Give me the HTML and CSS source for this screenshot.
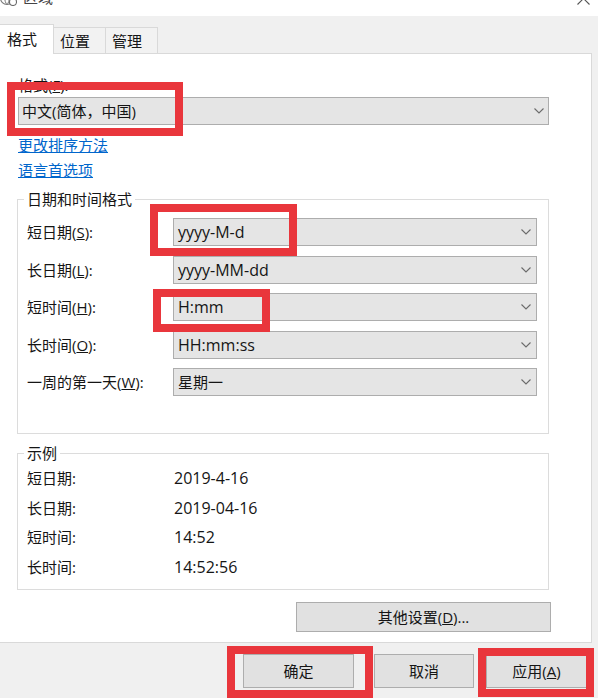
FILE: index.html
```html
<!DOCTYPE html>
<html lang="zh-CN">
<head>
<meta charset="utf-8">
<title>区域</title>
<link rel="stylesheet" href="styles.css">
</head>
<body>
<div class="window">
  <header class="titlebar">
    <svg class="app-icon" width="17" height="16" viewBox="0 0 17 16">
      <circle cx="7" cy="8" r="6.5" fill="none" stroke="#7a7a7a" stroke-width="1.2"/>
      <path d="M1 8h12M7 1.5c-3 3-3 10 0 13M7 1.5c3 3 3 10 0 13" fill="none" stroke="#7a7a7a" stroke-width="1"/>
      <circle cx="13" cy="12" r="3.5" fill="#fff" stroke="#6a6a6a" stroke-width="1.1"/>
    </svg>
    <span class="title">区域</span>
    <svg class="close" width="13" height="13" viewBox="0 0 13 13">
      <path d="M0.5 0.5L12.5 12.5M12.5 0.5L0.5 12.5" stroke="#555" stroke-width="1.1"/>
    </svg>
  </header>

  <nav class="tabs">
    <div class="tab active">格式</div>
    <div class="tab">位置</div>
    <div class="tab">管理</div>
    <div class="tab-fill"></div>
  </nav>

  <main class="panel">
    <div class="field-label">格式(<u>F</u>):</div>
    <div class="combo wide">
      <span>中文(简体，中国)</span>
      <svg class="chev" width="10" height="6" viewBox="0 0 10 6"><path d="M0.5 0.5L5 5L9.5 0.5" fill="none" stroke="#6b6b6b" stroke-width="1.1"/></svg>
    </div>
    <a class="link link-first" href="#">更改排序方法</a>
    <a class="link link-second" href="#">语言首选项</a>

    <fieldset class="group formats">
      <legend>日期和时间格式</legend>
      <div class="rows">
        <div class="row">
          <span class="lbl">短日期(<u>S</u>):</span>
          <div class="combo"><span class="latin">yyyy-M-d</span><svg class="chev" width="10" height="6" viewBox="0 0 10 6"><path d="M0.5 0.5L5 5L9.5 0.5" fill="none" stroke="#6b6b6b" stroke-width="1.1"/></svg></div>
        </div>
        <div class="row">
          <span class="lbl">长日期(<u>L</u>):</span>
          <div class="combo"><span class="latin">yyyy-MM-dd</span><svg class="chev" width="10" height="6" viewBox="0 0 10 6"><path d="M0.5 0.5L5 5L9.5 0.5" fill="none" stroke="#6b6b6b" stroke-width="1.1"/></svg></div>
        </div>
        <div class="row">
          <span class="lbl">短时间(<u>H</u>):</span>
          <div class="combo"><span class="latin">H:mm</span><svg class="chev" width="10" height="6" viewBox="0 0 10 6"><path d="M0.5 0.5L5 5L9.5 0.5" fill="none" stroke="#6b6b6b" stroke-width="1.1"/></svg></div>
        </div>
        <div class="row">
          <span class="lbl">长时间(<u>O</u>):</span>
          <div class="combo"><span class="latin">HH:mm:ss</span><svg class="chev" width="10" height="6" viewBox="0 0 10 6"><path d="M0.5 0.5L5 5L9.5 0.5" fill="none" stroke="#6b6b6b" stroke-width="1.1"/></svg></div>
        </div>
        <div class="row">
          <span class="lbl">一周的第一天(<u>W</u>):</span>
          <div class="combo"><span>星期一</span><svg class="chev" width="10" height="6" viewBox="0 0 10 6"><path d="M0.5 0.5L5 5L9.5 0.5" fill="none" stroke="#6b6b6b" stroke-width="1.1"/></svg></div>
        </div>
      </div>
    </fieldset>

    <fieldset class="group example">
      <legend>示例</legend>
      <div class="ex-row"><span class="lbl">短日期:</span><span class="latin">2019-4-16</span></div>
      <div class="ex-row"><span class="lbl">长日期:</span><span class="latin">2019-04-16</span></div>
      <div class="ex-row"><span class="lbl">短时间:</span><span class="latin">14:52</span></div>
      <div class="ex-row"><span class="lbl">长时间:</span><span class="latin">14:52:56</span></div>
    </fieldset>

    <div class="more-row"><button class="btn more">其他设置(<u>D</u>)...</button></div>
  </main>

  <footer class="footer">
    <button class="btn ok">确定</button>
    <button class="btn cancel">取消</button>
    <button class="btn apply">应用(<u>A</u>)</button>
  </footer>

  <div class="mark mark-format"></div>
  <div class="mark mark-short-date"></div>
  <div class="mark mark-short-time"></div>
  <div class="mark mark-ok"></div>
  <div class="mark mark-apply"></div>
</div>
</body>
</html>
```

FILE: styles.css
```css
* { box-sizing: border-box; }

html, body {
  margin: 0;
  padding: 0;
}

body {
  width: 598px;
  height: 698px;
  overflow: hidden;
  background: #f0f0f0;
  font-family: "Open Sans", "Noto Sans CJK SC", sans-serif;
  font-size: 15px;
  line-height: 18px;
  color: #151515;
}

.window {
  position: relative;
  width: 598px;
  height: 698px;
}

/* title bar (mostly cropped) */
.titlebar {
  height: 16px;
  background: #fff;
  display: flex;
  align-items: flex-end;
  padding-bottom: 11px;
  overflow: hidden;
}

.app-icon {
  flex: none;
  margin-left: 0;
  margin-bottom: -1px;
}

.title {
  margin-left: 6px;
  font-size: 15px;
  line-height: 15px;
  color: #444;
}

.close {
  flex: none;
  margin-left: auto;
  margin-right: 8px;
}

/* tabs */
.tabs {
  display: flex;
  align-items: flex-end;
  width: 592px;
  height: 30px;
  margin-top: 8px;
}

.tab {
  height: 27px;
  width: 52px;
  padding: 1px 0 0 6px;
  border-top: 1px solid #d9d9d9;
  border-right: 1px solid #d9d9d9;
  border-bottom: 1px solid #d9d9d9;
  background: #f2f2f2;
  display: flex;
  align-items: center;
}

.tab.active {
  width: 54px;
  height: 30px;
  padding: 0 0 2px 7px;
  background: #fff;
  border-bottom: none;
}

.tab-fill {
  flex: 1;
  height: 1px;
  background: #d9d9d9;
}

/* main panel */
.panel {
  width: 592px;
  background: #fff;
  border-right: 1px solid #d9d9d9;
  border-bottom: 1px solid #d9d9d9;
  padding: 22px 40px 10px 18px;
}

.field-label {
  margin-bottom: 3px;
}

.combo {
  height: 28px;
  border: 1px solid #adadad;
  background: #e5e5e5;
  display: flex;
  align-items: center;
  justify-content: space-between;
  padding: 0 5px 0 4px;
}

.combo.wide {
  margin-right: 2px;
  padding: 0 4px 0 3px;
}

.chev {
  flex: none;
}

.latin {
  font-size: 16px;
}

.link {
  display: block;
  width: max-content;
  color: #0066cc;
  text-decoration: underline;
}

.link-first { margin-top: 11px; }
.link-second { margin-top: 7px; }

/* group boxes */
.group {
  margin: 11px 2px 0 -1px;
  border: 1px solid #dcdcdc;
  min-width: 0;
}

.group legend {
  padding: 0 3px;
  margin-left: -3px;
  line-height: 18px;
}

.formats {
  padding: 10px 11px 37px 9px;
}

.rows {
  display: flex;
  flex-direction: column;
  gap: 9.5px;
}

.row {
  display: flex;
  align-items: center;
  height: 28px;
}

.row .lbl {
  flex: none;
  width: 146px;
}

.row .combo {
  flex: 1;
}

.example {
  margin-top: 10px;
  padding: 1px 11px 7px 9px;
}

.ex-row {
  display: flex;
  align-items: center;
  height: 29.75px;
}

.ex-row .lbl {
  flex: none;
  width: 147px;
}

/* buttons */
.btn {
  font: inherit;
  color: #151515;
  background: #e1e1e1;
  border: 1px solid #adadad;
  padding: 0;
  line-height: 18px;
}

.more-row {
  display: flex;
  justify-content: flex-end;
  margin-top: 12px;
}

.btn.more {
  width: 255px;
  height: 30px;
}

.footer {
  height: 55px;
  display: flex;
  justify-content: flex-end;
  align-items: flex-start;
  padding: 11px 11px 0 0;
}

.btn.ok { width: 111px; height: 34px; }
.btn.cancel { width: 100px; height: 34px; margin-left: 20px; }
.btn.apply { width: 101px; height: 34px; margin-left: 12px; }

/* red annotation boxes drawn over the screenshot */
.mark {
  position: absolute;
  border: 8px solid #e9363c;
}

.mark-format { left: 7px; top: 82px; width: 176px; height: 54px; }
.mark-short-date { left: 150px; top: 204px; width: 147px; height: 52px; }
.mark-short-time { left: 153px; top: 289px; width: 117px; height: 43px; }
.mark-ok { left: 227px; top: 646px; width: 146px; height: 52px; }
.mark-apply { left: 478px; top: 648px; width: 116px; height: 49px; }
```
